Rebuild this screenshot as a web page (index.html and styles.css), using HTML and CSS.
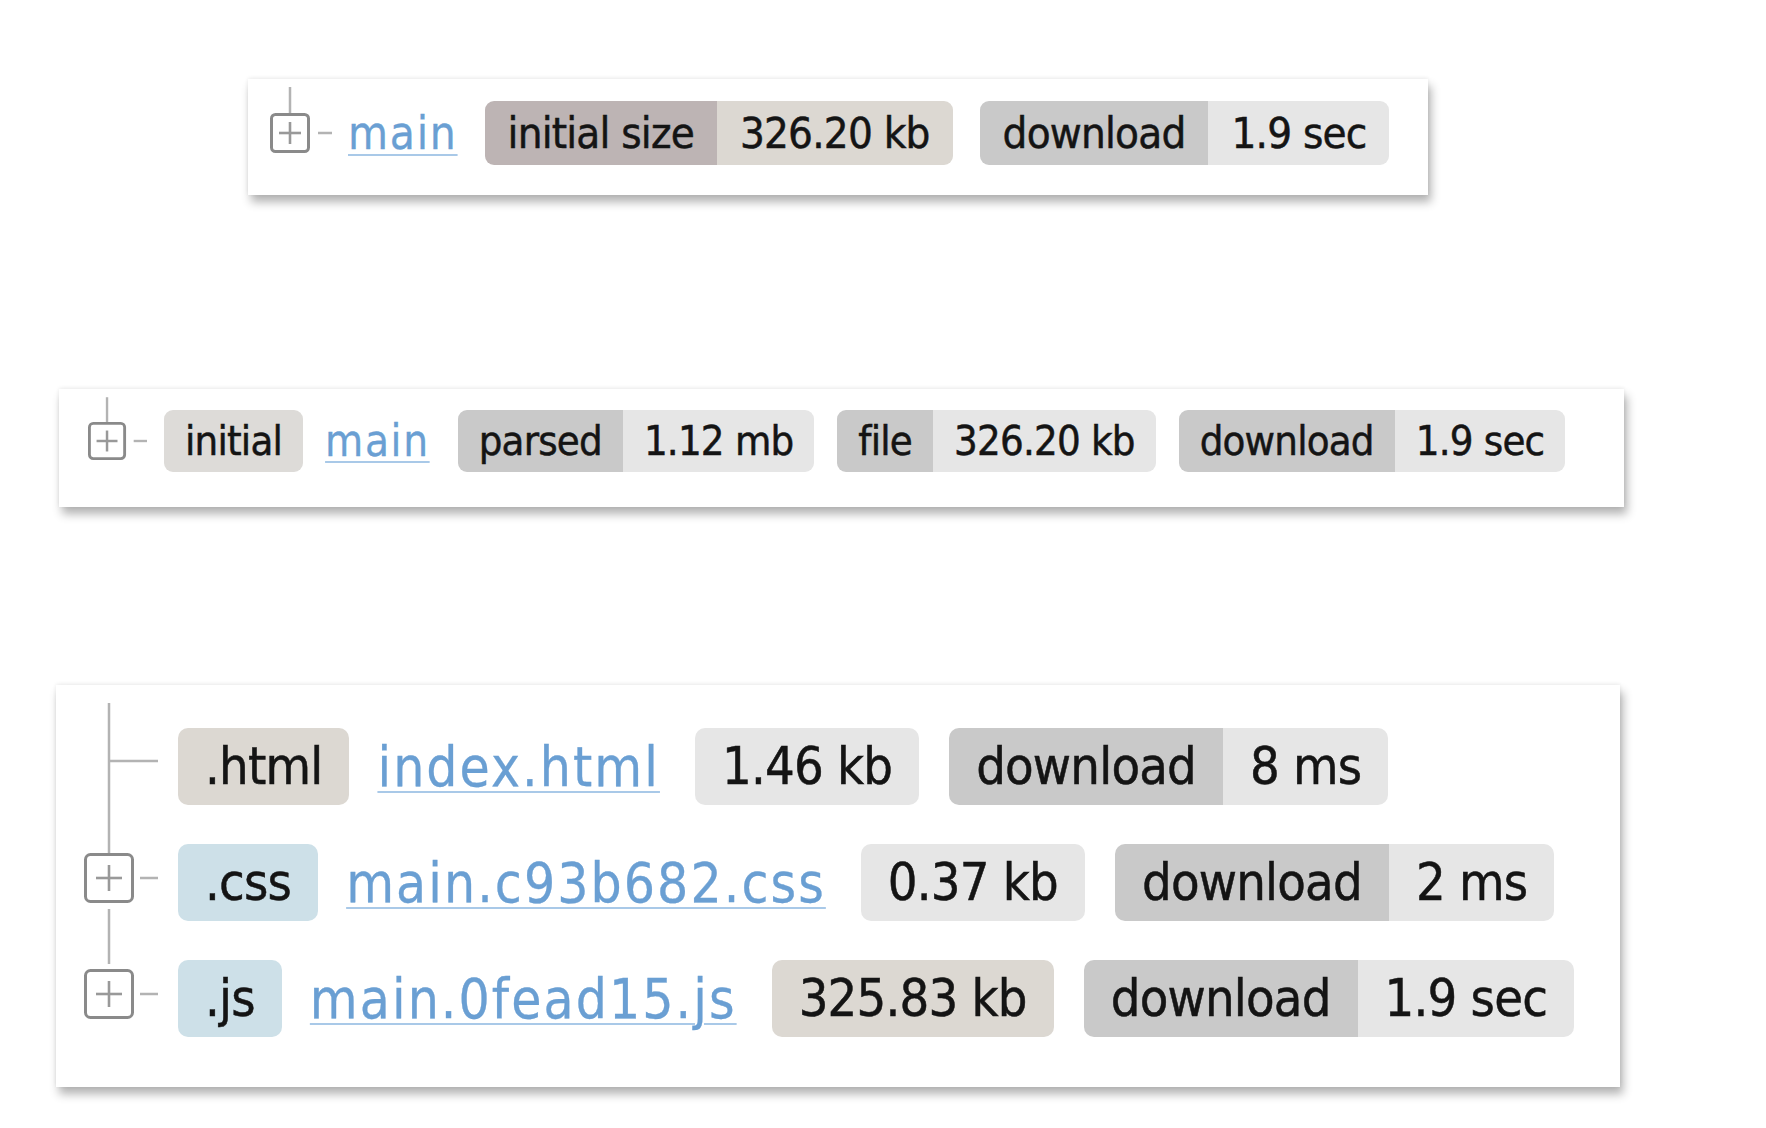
FILE: index.html
```html
<!DOCTYPE html>
<html lang="en">
<head>
<meta charset="utf-8">
<title>Bundle tree</title>
<link rel="stylesheet" href="styles.css">
</head>
<body>
<main class="stage">
  <section class="card card-a">
    <svg class="toggle" viewBox="0 0 62 92" aria-hidden="true">
      <line x1="20" y1="0" x2="20" y2="26" class="tl"/>
      <rect x="1.5" y="27.5" width="37" height="37" rx="4" class="tb"/>
      <line x1="9" y1="46" x2="31" y2="46" class="tp"/>
      <line x1="20" y1="35" x2="20" y2="57" class="tp"/>
      <line x1="48" y1="46" x2="62" y2="46" class="tl"/>
    </svg>
    <a class="link" href="#">main</a>
    <span class="pill"><span class="k mauve">initial size</span><span class="v beige">326.20 kb</span></span>
    <span class="pill"><span class="k grey">download</span><span class="v light">1.9 sec</span></span>
  </section>

  <section class="card card-b">
    <svg class="toggle" viewBox="0 0 62 92" aria-hidden="true">
      <line x1="20" y1="0" x2="20" y2="26" class="tl"/>
      <rect x="1.5" y="27.5" width="37" height="37" rx="4" class="tb"/>
      <line x1="9" y1="46" x2="31" y2="46" class="tp"/>
      <line x1="20" y1="35" x2="20" y2="57" class="tp"/>
      <line x1="48" y1="46" x2="62" y2="46" class="tl"/>
    </svg>
    <span class="pill tag"><span class="k soft">initial</span></span>
    <a class="link" href="#">main</a>
    <span class="pill"><span class="k grey">parsed</span><span class="v light">1.12 mb</span></span>
    <span class="pill"><span class="k grey">file</span><span class="v light">326.20 kb</span></span>
    <span class="pill"><span class="k grey">download</span><span class="v light">1.9 sec</span></span>
  </section>

  <section class="card card-c">
    <svg class="tree" viewBox="0 0 122 352" aria-hidden="true">
      <line x1="53" y1="18" x2="53" y2="168" class="tl"/>
      <line x1="53" y1="76" x2="102" y2="76" class="tl"/>
      <rect x="29.5" y="169.5" width="47" height="47" rx="5" class="tb"/>
      <line x1="40" y1="193" x2="66" y2="193" class="tp"/>
      <line x1="53" y1="180" x2="53" y2="206" class="tp"/>
      <line x1="84" y1="193" x2="102" y2="193" class="tl"/>
      <line x1="53" y1="224" x2="53" y2="279" class="tl"/>
      <rect x="29.5" y="285.5" width="47" height="47" rx="5" class="tb"/>
      <line x1="40" y1="309" x2="66" y2="309" class="tp"/>
      <line x1="53" y1="296" x2="53" y2="322" class="tp"/>
      <line x1="84" y1="309" x2="102" y2="309" class="tl"/>
    </svg>
    <div class="rows">
      <div class="row">
        <span class="pill tag"><span class="k beige">.html</span></span>
        <a class="link" href="#">index.html</a>
        <span class="pill size"><span class="k light">1.46 kb</span></span>
        <span class="pill"><span class="k grey">download</span><span class="v light">8 ms</span></span>
      </div>
      <div class="row">
        <span class="pill tag"><span class="k blue">.css</span></span>
        <a class="link" href="#">main.c93b682.css</a>
        <span class="pill size"><span class="k light">0.37 kb</span></span>
        <span class="pill"><span class="k grey">download</span><span class="v light">2 ms</span></span>
      </div>
      <div class="row">
        <span class="pill tag"><span class="k blue">.js</span></span>
        <a class="link" href="#">main.0fead15.js</a>
        <span class="pill size"><span class="k beige">325.83 kb</span></span>
        <span class="pill"><span class="k grey">download</span><span class="v light">1.9 sec</span></span>
      </div>
    </div>
  </section>
</main>
</body>
</html>
```

FILE: styles.css
```css
html, body {
  margin: 0;
  padding: 0;
  background: #ffffff;
}

body {
  font-family: "DejaVu Sans Condensed", "DejaVu Sans", sans-serif;
  font-stretch: condensed;
  letter-spacing: -0.05em;
  color: #141414;
}

.stage {
  display: flex;
  flex-direction: column;
  align-items: flex-start;
  padding-top: 79px;
  padding-bottom: 30px;
}

.card {
  background: #ffffff;
  box-sizing: border-box;
  display: flex;
  align-items: center;
  box-shadow: 0 -1px 4px rgba(0, 0, 0, 0.07), 3px 7px 9px rgba(0, 0, 0, 0.3);
}

/* card 1 */
.card-a {
  margin-left: 248px;
  width: 1180px;
  height: 116px;
  padding: 0 0 8px 22px;
  font-size: 43.5px;
}
.card-a .toggle { width: 62px; height: 92px; }
.card-a .link { margin-left: 16px; }
.card-a .pill { margin-left: 27px; height: 64px; border-radius: 9px; }
.card-a .pill > span { padding: 0 23px; line-height: 64px; }

/* card 2 */
.card-b {
  margin-top: 194px;
  margin-left: 59px;
  width: 1565px;
  height: 118px;
  padding: 0 0 14px 29px;
  font-size: 41.5px;
}
.card-b .toggle { width: 59px; height: 88px; }
.card-b .pill { margin-left: 23px; height: 62px; border-radius: 9px; }
.card-b .pill > span { padding: 0 21px; line-height: 62px; }
.card-b .pill.tag { margin-left: 17px; }
.card-b .link { margin-left: 22px; }
.card-b .link + .pill { margin-left: 28px; }

/* card 3 */
.card-c {
  margin-top: 178px;
  margin-left: 56px;
  width: 1564px;
  height: 402px;
  align-items: flex-start;
  font-size: 52px;
}
.tree { width: 122px; height: 352px; flex: none; }
.rows {
  display: flex;
  flex-direction: column;
  gap: 39px;
  padding-top: 43px;
}
.row {
  display: flex;
  align-items: center;
}
.card-c .pill { height: 77px; border-radius: 10px; margin-left: 30px; }
.card-c .pill > span { padding: 0 27px; line-height: 77px; }
.card-c .pill.tag { margin-left: 0; }
.card-c .link { margin-left: 28px; }
.card-c .link + .pill { margin-left: 35px; }

/* tree strokes */
.tl { stroke: #b3b3b3; stroke-width: 2.5; }
.tb { fill: #ffffff; stroke: #8a8a8a; stroke-width: 3; }
.tp { stroke: #999999; stroke-width: 2.6; }
.toggle { flex: none; }

.link {
  font-size: 1.05em;
  letter-spacing: 0.038em;
  color: #6a9fd3;
  text-decoration: underline;
  text-decoration-color: #a9c9e8;
  text-decoration-thickness: 2px;
  text-underline-offset: 5px;
  white-space: nowrap;
  -webkit-text-stroke: 0.3px #6a9fd3;
}

.pill {
  display: inline-flex;
  overflow: hidden;
  white-space: nowrap;
  flex: none;
  -webkit-text-stroke: 0.5px #141414;
}
.pill > span { display: block; }

.mauve { background: #bdb4b4; }
.beige { background: #dcd8d2; }
.grey { background: #c9c9c9; }
.light { background: #e6e6e6; }
.soft { background: #dddbd8; }
.blue { background: #cde0e8; }
```
